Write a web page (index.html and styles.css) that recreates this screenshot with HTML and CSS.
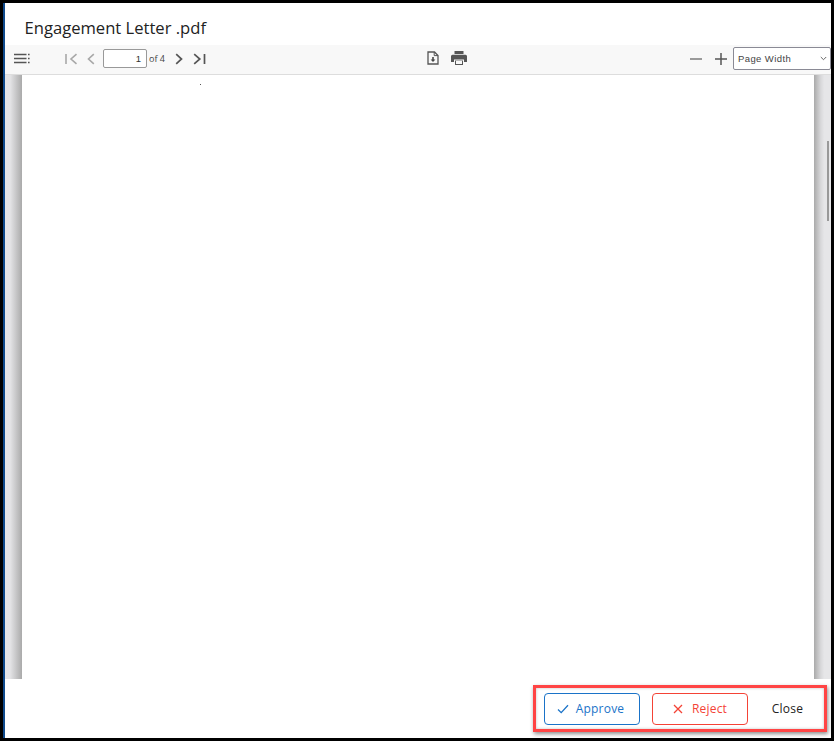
FILE: index.html
```html
<!DOCTYPE html>
<html lang="en">
<head>
<meta charset="utf-8">
<title>Engagement Letter .pdf</title>
<link rel="stylesheet" href="styles.css">
</head>
<body>
<div class="window">
  <header class="title-bar"><h1 class="title">Engagement Letter .pdf</h1></header>
  <div class="toolbar">
    <div class="tb-left">
      <svg class="ic ic-menu" width="16" height="12" viewBox="0 0 16 12"><path d="M0 1.5h12.5M0 5.5h12.5M0 9.5h12.5" stroke="#555" stroke-width="1.7" fill="none"/><path d="M14 1.5h1.6M14 5.5h1.6M14 9.5h1.6" stroke="#555" stroke-width="1.7" fill="none"/></svg>
      <svg class="ic ic-first" width="13" height="12" viewBox="0 0 13 12"><path d="M1 1v10M11.5 1.2 6 6l5.5 4.8" stroke="#a8a8a8" stroke-width="1.6" fill="none"/></svg>
      <svg class="ic ic-prev" width="8" height="12" viewBox="0 0 8 12"><path d="M6.8 1.2 1.5 6l5.3 4.8" stroke="#a8a8a8" stroke-width="1.6" fill="none"/></svg>
      <div class="page-input">1</div>
      <span class="page-count">of 4</span>
      <svg class="ic ic-next" width="8" height="12" viewBox="0 0 8 12"><path d="M1.2 1.2 6.5 6l-5.3 4.8" stroke="#555" stroke-width="1.7" fill="none"/></svg>
      <svg class="ic ic-last" width="13" height="12" viewBox="0 0 13 12"><path d="M1.2 1.2 6.8 6l-5.6 4.8M11.5 1v10" stroke="#555" stroke-width="1.7" fill="none"/></svg>
    </div>
    <div class="tb-center">
      <svg class="ic" width="12" height="14" viewBox="0 0 12 14"><path d="M1 1h6.5L11 4.5V13H1z" stroke="#555" stroke-width="1.3" fill="none"/><path d="M7.2 1v3.6H11" stroke="#555" stroke-width="1" fill="none"/><path d="M6 6v3.4" stroke="#444" stroke-width="1.6"/><path d="M3.6 8.6h4.8L6 11z" fill="#444"/></svg>
      <svg class="ic" width="16" height="14" viewBox="0 0 16 14"><path d="M3.5 0h9v3h-9z" fill="#555"/><path d="M1.5 3.7h13A1.5 1.5 0 0 1 16 5.2V11h-3V8.5H3V11H0V5.2a1.5 1.5 0 0 1 1.5-1.5z" fill="#555"/><path d="M4 9.5h8V14H4z" fill="#555"/><path d="M5 9.8h6v3.2H5z" fill="#f8f8f8"/></svg>
    </div>
    <div class="tb-right">
      <svg class="ic" width="12" height="12" viewBox="0 0 12 12"><path d="M0 6h12" stroke="#666" stroke-width="1.3"/></svg>
      <svg class="ic" width="12" height="12" viewBox="0 0 12 12"><path d="M0 6h12M6 0v12" stroke="#555" stroke-width="1.5"/></svg>
      <div class="zoom-select"><span>Page Width</span><svg width="7" height="5" viewBox="0 0 7 5"><path d="M.8 1 3.5 3.7 6.2 1" stroke="#666" stroke-width="1" fill="none"/></svg></div>
    </div>
  </div>
  <div class="viewer">
    <div class="gutter gutter-left"></div>
    <div class="page"><span class="speck"></span></div>
    <div class="gutter gutter-right"><div class="thumb"></div></div>
  </div>
  <footer class="footer">
    <div class="actions">
      <button class="btn btn-approve"><svg width="12" height="10" viewBox="0 0 12 10"><path d="M1 5.5 4.2 8.6 11 1.2" stroke="#1a73c8" stroke-width="1.3" fill="none"/></svg>Approve</button>
      <button class="btn btn-reject"><svg width="10" height="10" viewBox="0 0 10 10"><path d="M1 1l8 8M9 1 1 9" stroke="#f44336" stroke-width="1.3" fill="none"/></svg>Reject</button>
      <button class="btn btn-close">Close</button>
    </div>
  </footer>
</div>
</body>
</html>
```
FILE: styles.css
```css
html, body { margin: 0; height: 100%; }
body { background: #000; overflow: hidden; }
.window {
  box-sizing: border-box;
  width: 828px;
  height: 735px;
  margin: 3px 0 0 3px;
  border-left: 2px solid #0f4a8c;
  background: #fff;
  display: flex;
  flex-direction: column;
  font-family: "Open Sans", sans-serif;
}
.title-bar { height: 42px; display: flex; align-items: center; padding-left: 19.5px; flex: none; }
.title { margin: 0; padding-top: 6px; font-size: 16.6px; font-weight: 400; color: #222; }
.toolbar {
  box-sizing: border-box;
  flex: none;
  height: 30px;
  padding-bottom: 2px;
  background: #f8f8f8;
  border-bottom: 1px solid #ddd;
  display: flex;
  align-items: center;
}
.tb-left { display: flex; align-items: center; padding-left: 9px; }
.tb-center { display: flex; align-items: center; gap: 12px; margin: 0 0 2px 221px; }
.tb-right { display: flex; align-items: center; justify-content: flex-end; margin-left: auto; }
.ic { display: block; flex: none; }
.ic-first { margin-left: 35px; }
.ic-prev { margin-left: 9px; }
.page-input {
  box-sizing: border-box;
  width: 44px;
  height: 19px;
  margin-left: 8px;
  border: 1px solid #999;
  border-radius: 2px;
  background: #fff;
  font: 9.5px/17px "Liberation Sans", sans-serif;
  color: #333;
  text-align: right;
  padding-right: 5px;
}
.page-count { margin-left: 2px; font-size: 9px; color: #444; width: 26px; }
.ic-next { margin-left: 0; }
.ic-last { margin-left: 10px; }
.tb-right .ic + .ic { margin-left: 13px; }
.zoom-select {
  box-sizing: border-box;
  width: 98px;
  height: 23px;
  margin-left: 6px;
  border: 1px solid #8a8a95;
  border-radius: 2px;
  background: #fff;
  display: flex;
  align-items: center;
  justify-content: space-between;
  padding: 0 3px 0 4px;
  font: 9.5px "Liberation Sans", sans-serif;
  letter-spacing: 0.4px;
  color: #444;
}
.viewer { flex: 1; display: flex; min-height: 0; }
.gutter { flex: none; width: 17px; }
.gutter-left { background: linear-gradient(to right, #e6e6e8 0, #e4e4e6 30%, #aaa 100%); }
.gutter-right {
  box-sizing: border-box;
  background: linear-gradient(to right, #aaa 0, #d8d8da 40%, #e6e6e8 60%);
  padding: 66px 0 0 13px;
}
.thumb { width: 2px; height: 80px; background: #999; }
.page { flex: 1; background: #fff; padding: 9px 0 0 178px; }
.speck { display: block; width: 1px; height: 1px; background: #555; }
.footer { flex: none; height: 59px; display: flex; justify-content: flex-end; padding: 6px 4px 0 0; box-sizing: border-box; }
.actions {
  box-sizing: border-box;
  width: 294px;
  height: 47px;
  border: 3px solid #f44;
  box-shadow: 1px 2px 4px rgba(0,0,0,.45), inset 0 0 3px rgba(0,0,0,.25);
  display: flex;
  align-items: center;
  gap: 12px;
  padding: 0 0 0 8px;
}
.btn {
  box-sizing: border-box;
  height: 32px;
  width: 96px;
  border-radius: 4px;
  background: #fff;
  border: 1px solid;
  font: 400 12px "Open Sans", sans-serif;
  letter-spacing: .2px;
  display: flex;
  align-items: center;
  justify-content: center;
  gap: 7px;
  padding: 0;
}
.btn-approve { border-color: #1a73c8; color: #1a73c8; gap: 7px; padding-right: 3px; }
.btn-reject { border-color: #f44336; color: #f44336; gap: 9px; }
.btn-close { border: 0; width: 55px; color: #222; background: transparent; }
```
